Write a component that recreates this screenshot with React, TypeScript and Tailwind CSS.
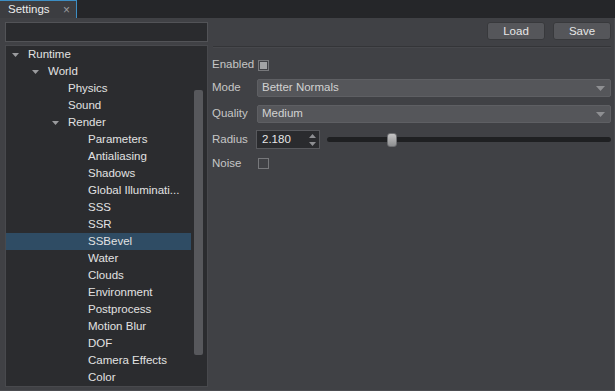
const tree = [
  { label: 'Runtime', depth: 0, open: true },
  { label: 'World', depth: 1, open: true },
  { label: 'Physics', depth: 2 },
  { label: 'Sound', depth: 2 },
  { label: 'Render', depth: 2, open: true },
  { label: 'Parameters', depth: 3 },
  { label: 'Antialiasing', depth: 3 },
  { label: 'Shadows', depth: 3 },
  { label: 'Global Illuminati...', depth: 3 },
  { label: 'SSS', depth: 3 },
  { label: 'SSR', depth: 3 },
  { label: 'SSBevel', depth: 3, selected: true },
  { label: 'Water', depth: 3 },
  { label: 'Clouds', depth: 3 },
  { label: 'Environment', depth: 3 },
  { label: 'Postprocess', depth: 3 },
  { label: 'Motion Blur', depth: 3 },
  { label: 'DOF', depth: 3 },
  { label: 'Camera Effects', depth: 3 },
  { label: 'Color', depth: 3 },
]

const indents = ['pl-[6px]', 'pl-[26px]', 'pl-[46px]', 'pl-[66px]']

function Arrow() {
  return (
    <svg width="7" height="4" viewBox="0 0 7 4" className="shrink-0">
      <path d="M0 0 H7 L3.5 4 Z" fill="#9a9b9e" />
    </svg>
  )
}

function DropArrow() {
  return (
    <svg width="9" height="5" viewBox="0 0 9 5">
      <path d="M0 0 H9 L4.5 5 Z" fill="#8e8f92" />
    </svg>
  )
}

function Select({ value }: { value: string }) {
  return (
    <div className="flex-1 h-[18px] flex items-center justify-between pl-[4px] pr-[5px] bg-[#55565a] border border-[#5e5f63] rounded-[2px] text-[#d2d2d2]">
      <span>{value}</span>
      <DropArrow />
    </div>
  )
}

export default function App() {
  return (
    <div
      className="w-[615px] h-[391px] flex flex-col bg-[#404145] text-[11.5px] overflow-hidden"
      style={{ fontFamily: '"Liberation Sans", Arial, sans-serif' }}
    >
      {/* tab strip */}
      <div className="h-[18px] bg-[#252629] flex shrink-0">
        <div className="w-[77px] h-[18px] bg-[#3c3d41] border-t border-r border-[#3d8ec4] flex items-center pl-[8px] pr-[6px] justify-between text-[#ececec]">
          <span>Settings</span>
          <span className="text-[#9a9b9e] text-[12px]">×</span>
        </div>
      </div>

      <div className="flex-1 flex border-r border-b border-[#4c4d51] pb-[3px]">
        {/* left column */}
        <div className="w-[203px] ml-[5px] pt-[4px] flex flex-col gap-[3px]">
          <div className="h-[20px] bg-[#2a2b2e] border border-[#525357] shrink-0" />
          <div className="flex-1 bg-[#2b2c2f] border border-[#48494d] flex">
            <div className="w-[185px] flex flex-col">
              {tree.map((t) => (
                <div
                  key={t.label}
                  className={`h-[17px] flex items-center ${indents[t.depth]} ${
                    t.selected ? 'bg-[#2f4c64]' : ''
                  } text-[#e2e2e2]`}
                >
                  <div className="w-[16px] flex items-center">{t.open ? <Arrow /> : null}</div>
                  <span className="whitespace-nowrap">{t.label}</span>
                </div>
              ))}
            </div>
            <div className="flex-1 flex justify-center pt-[44px] pb-[31px] pr-[1px]">
              <div className="w-[9px] h-full bg-[#57585c] rounded-[2px]" />
            </div>
          </div>
        </div>

        {/* right column */}
        <div className="flex-1 ml-[4px] mr-[3px] pt-[4px] flex flex-col">
          <div className="flex justify-end gap-[8px]">
            <button className="w-[58px] h-[18px] bg-[#55565a] border border-[#38393c] rounded-[3px] text-[#e6e6e6]">
              Load
            </button>
            <button className="w-[58px] h-[18px] bg-[#55565a] border border-[#38393c] rounded-[3px] text-[#e6e6e6]">
              Save
            </button>
          </div>
          <div className="mt-[6px] h-[1px] bg-[#343538] ml-[1px]" />
          <div className="h-[1px] bg-[#47484c] ml-[1px]" />

          <div className="flex flex-col text-[#c6c6c6]">
            <div className="h-[12px] mt-[11px] flex items-center">
              <span className="w-[46px]">Enabled</span>
              <div className="w-[11px] h-[11px] border border-[#77787b] flex items-center justify-center">
                <div className="w-[7px] h-[7px] bg-[#a2a3a5]" />
              </div>
            </div>
            <div className="h-[18px] mt-[8px] flex items-center">
              <span className="w-[45px]">Mode</span>
              <Select value="Better Normals" />
            </div>
            <div className="h-[18px] mt-[8px] flex items-center">
              <span className="w-[45px]">Quality</span>
              <Select value="Medium" />
            </div>
            <div className="h-[19px] mt-[7px] flex items-center">
              <span className="w-[44px]">Radius</span>
              <div className="w-[64px] h-[19px] bg-[#2a2b2e] border border-[#58595d] flex items-center justify-between pl-[5px] pr-[3px] text-[#e6e6e6]">
                <span>2.180</span>
                <svg width="7" height="12" viewBox="0 0 7 12">
                  <path d="M0 4 L3.5 0 L7 4 Z" fill="#8e8f92" />
                  <path d="M0 8 H7 L3.5 12 Z" fill="#8e8f92" />
                </svg>
              </div>
              <div className="flex-1 ml-[7px] relative h-[16px] flex items-center">
                <div className="w-full h-[5px] bg-[#1f2022] rounded-full" />
                <div className="absolute left-[60px] top-[1px] w-[10px] h-[14px] rounded-[3px] bg-gradient-to-b from-[#c4c4c4] to-[#8e8f91] border border-[#6e6f72]" />
              </div>
            </div>
            <div className="h-[11px] mt-[9px] flex items-center">
              <span className="w-[46px]">Noise</span>
              <div className="w-[11px] h-[11px] border border-[#77787b]" />
            </div>
          </div>
        </div>
      </div>
    </div>
  )
}
